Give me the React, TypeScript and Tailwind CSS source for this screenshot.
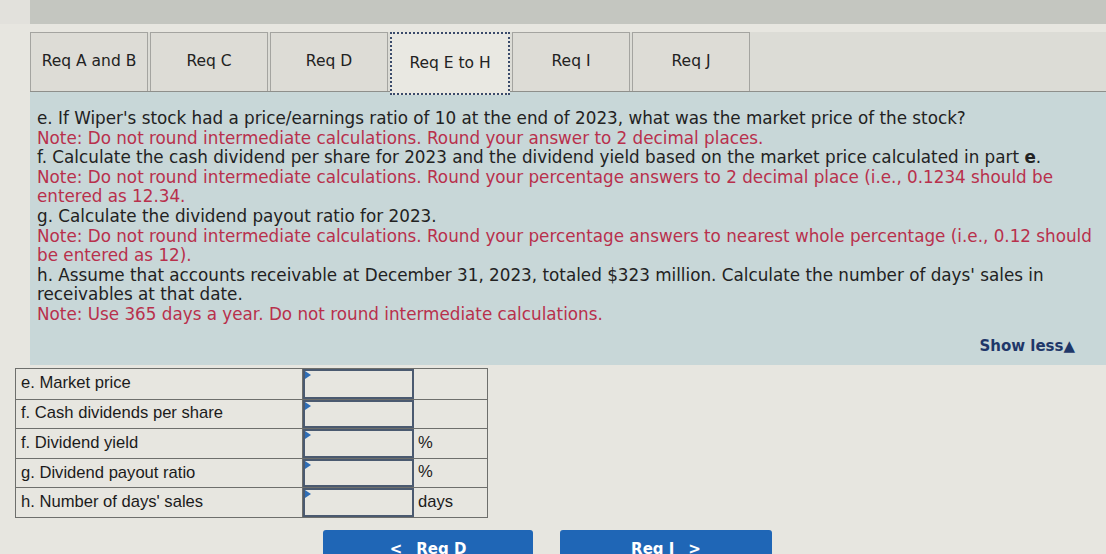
import React from "react";

const tabs = ["Req A and B", "Req C", "Req D", "Req E to H", "Req I", "Req J"];

const rows = [
  { label: "e. Market price", unit: "" },
  { label: "f. Cash dividends per share", unit: "" },
  { label: "f. Dividend yield", unit: "%" },
  { label: "g. Dividend payout ratio", unit: "%" },
  { label: "h. Number of days' sales", unit: "days" },
];

function Note({ children }: { children: React.ReactNode }) {
  return <div className="text-[#b8304c]">{children}</div>;
}

export default function App() {
  return (
    <div className="w-[1106px] h-[554px] overflow-hidden bg-[#e7e6e0] font-['DejaVu_Sans',Verdana,sans-serif]">
      <div className="flex">
        <div className="w-[30px] bg-[#e2e1dc]" />
        <div className="flex-1 h-[24px] bg-[#c4c6c0]" />
      </div>
      <div className="ml-[30px] mt-[8px] flex h-[60px] border-b border-[#8e8f8b] bg-[#dcdcd6]">
        {tabs.map((t, i) => (
          <div
            key={t}
            className={
              i === 3
                ? "w-[120px] h-[63px] mr-[2px] flex items-center justify-center text-[15.5px] text-[#222] bg-[#e9e8e2] border-2 border-dotted border-[#3a4a6a]"
                : "w-[118px] mr-[2px] flex items-center justify-center text-[15.5px] text-[#222] bg-[#dddcd6] border border-[#a4a4a0] border-b-0"
            }
          >
            {t}
          </div>
        ))}
      </div>
      <div className="ml-[30px] h-[273px] bg-[#c8d7d8] pt-[17px] pl-[7px] pr-[4px] text-[16.8px] leading-[19.6px] text-[#222]">
        <div>
          e. If Wiper's stock had a price/earnings ratio of 10 at the end of 2023, what was the market price of the stock?
        </div>
        <Note>Note: Do not round intermediate calculations. Round your answer to 2 decimal places.</Note>
        <div>
          f. Calculate the cash dividend per share for 2023 and the dividend yield based on the market price calculated in part <b>e</b>.
        </div>
        <Note>
          Note: Do not round intermediate calculations. Round your percentage answers to 2 decimal place (i.e., 0.1234 should be
          <br />
          entered as 12.34.
        </Note>
        <div>g. Calculate the dividend payout ratio for 2023.</div>
        <Note>
          <span className="whitespace-nowrap">
            Note: Do not round intermediate calculations. Round your percentage answers to nearest whole percentage (i.e., 0.12 should
          </span>
          <br />
          be entered as 12).
        </Note>
        <div>
          h. Assume that accounts receivable at December 31, 2023, totaled $323 million. Calculate the number of days' sales in
          <br />
          receivables at that date.
        </div>
        <Note>Note: Use 365 days a year. Do not round intermediate calculations.</Note>
        <div className="flex justify-end mt-[12px] pr-[27px]">
          <span className="text-[15px] font-bold text-[#1f3769]">Show less▲</span>
        </div>
      </div>
      <div className="ml-[15px] mt-[3px] w-[473px] border border-[#6e6f6c] font-['Liberation_Sans',Arial,sans-serif] text-[16.6px] text-[#1b1b1b]">
        {rows.map((r, i) => (
          <div key={i} className={"flex h-[29.6px] " + (i > 0 ? "border-t border-[#6e6f6c]" : "")}>
            <div className="w-[287px] pl-[5px] flex items-center border-r border-[#6e6f6c]">{r.label}</div>
            <div className="relative w-[111px] border-2 border-[#4b5a70]">
              <div className="absolute left-0 top-0 w-0 h-0 border-t-[4px] border-b-[4px] border-l-[6px] border-t-transparent border-b-transparent border-l-[#2f6db5]" />
            </div>
            <div className="flex-1 pl-[4px] flex items-end pb-[2px]">{r.unit}</div>
          </div>
        ))}
      </div>
      <div className="flex ml-[323px] mt-[12px] gap-[27px]">
        <div className="w-[210px] h-[40px] rounded-t-[3px] bg-[#1f66b6] text-white font-bold text-[15px] flex justify-center pt-[8px]">
          <span className="mr-[14px]">&lt;</span>Req D
        </div>
        <div className="w-[212px] h-[40px] rounded-t-[3px] bg-[#1f66b6] text-white font-bold text-[15px] flex justify-center pt-[8px]">
          Req I<span className="ml-[14px]">&gt;</span>
        </div>
      </div>
    </div>
  );
}
